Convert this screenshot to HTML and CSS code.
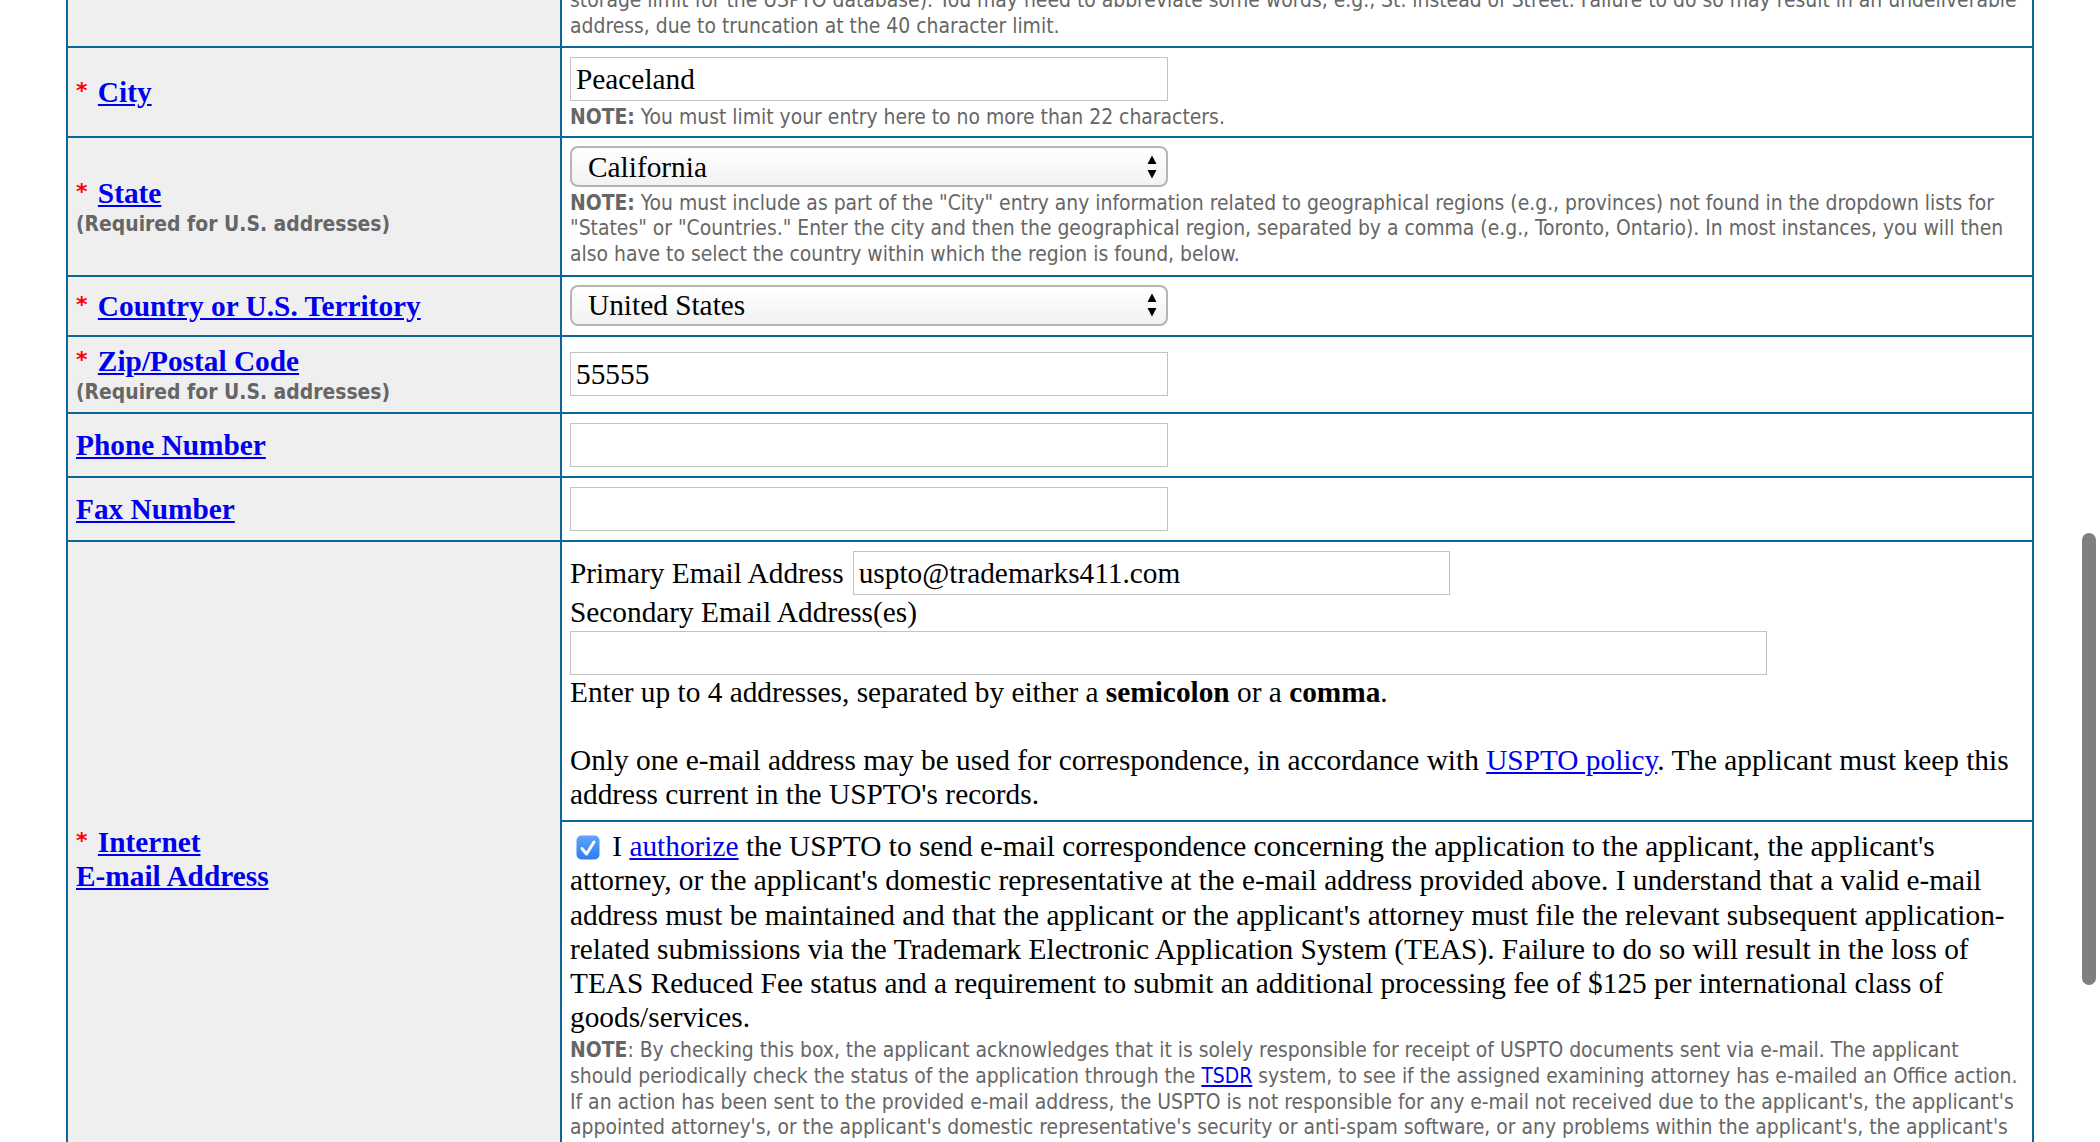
FILE: index.html
```html
<!DOCTYPE html>
<html>
<head>
<meta charset="utf-8">
<title>Correspondence Information</title>
<link rel="stylesheet" href="styles.css">
</head>
<body>
<table class="form">
  <colgroup><col class="col-label"><col class="col-field"></colgroup>
  <tbody>
    <tr>
      <td class="label"></td>
      <td class="field field-top">
        <div class="note nowrap">storage limit for the USPTO database). You may need to abbreviate some words, e.g., St. instead of Street. Failure to do so may result in an undeliverable<br>address, due to truncation at the 40 character limit.</div>
      </td>
    </tr>
    <tr>
      <td class="label"><span class="req">*</span> <a class="lbl" href="#">City</a></td>
      <td class="field field-city">
        <input class="text-input" type="text" value="Peaceland">
        <div class="note note-city"><b>NOTE:</b> You must limit your entry here to no more than 22 characters.</div>
      </td>
    </tr>
    <tr>
      <td class="label"><span class="req">*</span> <a class="lbl" href="#">State</a><div class="sub">(Required for U.S. addresses)</div></td>
      <td class="field field-state">
        <div class="select"><span>California</span><svg class="arrows" width="10" height="24" viewBox="0 0 10 24"><path d="M5 0.5 L9.5 9 L0.5 9 Z"/><path d="M0.5 15 L9.5 15 L5 23.5 Z"/></svg></div>
        <div class="note nowrap note-state"><b>NOTE:</b> You must include as part of the "City" entry any information related to geographical regions (e.g., provinces) not found in the dropdown lists for<br>"States" or "Countries." Enter the city and then the geographical region, separated by a comma (e.g., Toronto, Ontario). In most instances, you will then<br>also have to select the country within which the region is found, below.</div>
      </td>
    </tr>
    <tr>
      <td class="label"><span class="req">*</span> <a class="lbl" href="#">Country or U.S. Territory</a></td>
      <td class="field field-select">
        <div class="select"><span>United States</span><svg class="arrows" width="10" height="24" viewBox="0 0 10 24"><path d="M5 0.5 L9.5 9 L0.5 9 Z"/><path d="M0.5 15 L9.5 15 L5 23.5 Z"/></svg></div>
      </td>
    </tr>
    <tr>
      <td class="label"><span class="req">*</span> <a class="lbl" href="#">Zip/Postal Code</a><div class="sub">(Required for U.S. addresses)</div></td>
      <td class="field">
        <input class="text-input" type="text" value="55555">
      </td>
    </tr>
    <tr>
      <td class="label"><a class="lbl" href="#">Phone Number</a></td>
      <td class="field"><input class="text-input" type="text" value=""></td>
    </tr>
    <tr>
      <td class="label"><a class="lbl" href="#">Fax Number</a></td>
      <td class="field"><input class="text-input" type="text" value=""></td>
    </tr>
    <tr>
      <td class="label" rowspan="2"><span class="req">*</span> <a class="lbl" href="#">Internet<br>E-mail Address</a></td>
      <td class="field field-email">
        <div class="primary-line"><span>Primary Email Address</span><input class="text-input email-input" type="text" value="uspto@trademarks411.com"></div>
        <div>Secondary Email Address(es)</div>
        <input class="text-input secondary-input" type="text" value="">
        <div>Enter up to 4 addresses, separated by either a <b>semicolon</b> or a <b>comma</b>.<br><br>Only one e-mail address may be used for correspondence, in accordance with <a href="#">USPTO policy</a>. The applicant must keep this address current in the USPTO's records.</div>
      </td>
    </tr>
    <tr>
      <td class="field field-auth">
        <div class="auth-text"><span class="checkbox"><svg width="24" height="25" viewBox="0 0 24 25"><defs><linearGradient id="cbg" x1="0" y1="0" x2="0" y2="1"><stop offset="0" stop-color="#5ea3f8"/><stop offset="1" stop-color="#2f7eef"/></linearGradient></defs><rect x="0.5" y="0.5" width="23" height="24" rx="5" fill="url(#cbg)"/><path d="M6 13.5 L10.5 19 L18 7" fill="none" stroke="#fff" stroke-width="3" stroke-linecap="round" stroke-linejoin="round"/></svg></span> I <a href="#">authorize</a> the USPTO to send e-mail correspondence concerning the application to the applicant, the applicant's attorney, or the applicant's domestic representative at the e-mail address provided above. I understand that a valid e-mail address must be maintained and that the applicant or the applicant's attorney must file the relevant subsequent application-related submissions via the Trademark Electronic Application System (TEAS). Failure to do so will result in the loss of TEAS Reduced Fee status and a requirement to submit an additional processing fee of $125 per international class of goods/services.</div>
        <div class="note nowrap note-auth"><b>NOTE</b>: By checking this box, the applicant acknowledges that it is solely responsible for receipt of USPTO documents sent via e-mail. The applicant<br>should periodically check the status of the application through the <a href="#">TSDR</a> system, to see if the assigned examining attorney has e-mailed an Office action.<br>If an action has been sent to the provided e-mail address, the USPTO is not responsible for any e-mail not received due to the applicant's, the applicant's<br>appointed attorney's, or the applicant's domestic representative's security or anti-spam software, or any problems within the applicant's, the applicant's<br>appointed attorney's, or the applicant's domestic representative's e-mail account.</div>
      </td>
    </tr>
  </tbody>
</table>
<div class="scrollbar"></div>
</body>
</html>
```

FILE: styles.css
```css
html, body {
  margin: 0;
  padding: 0;
  overflow: hidden;
  background: #ffffff;
}

body {
  font-family: "Liberation Serif", "Times New Roman", serif;
  font-size: 29.33px;
  line-height: 34px;
  color: #000000;
}

a {
  color: #0000ee;
  text-decoration: underline;
}

.form {
  width: 1968px;
  margin: -21px auto 0;
  border-collapse: collapse;
  table-layout: fixed;
}

.col-label {
  width: 494px;
}

.form td {
  border: 2px solid #0a6598;
}

.label {
  background: #efefef;
  padding: 7px 8px;
  vertical-align: middle;
}

.field {
  background: #ffffff;
  padding: 9px 8px;
  vertical-align: middle;
}

.field-top {
  padding: 7px 8px 7px;
}

.field-city {
  padding: 9px 8px 6px;
}

.field-state {
  padding: 8px 8px 7px;
}

.field-select {
  padding: 8px 8px 9px;
}

.req {
  font-family: "DejaVu Sans", sans-serif;
  font-weight: bold;
  font-size: 22px;
  line-height: 22px;
  color: #ff0000;
  margin-right: 3px;
  vertical-align: 4px;
}

.lbl {
  font-weight: bold;
}

.sub {
  font-family: "DejaVu Sans Condensed", "DejaVu Sans", sans-serif;
  font-stretch: condensed;
  font-weight: bold;
  font-size: 20.9px;
  line-height: 25.6px;
  color: #666666;
  margin-top: 2px;
}

.note {
  font-family: "DejaVu Sans Condensed", "DejaVu Sans", sans-serif;
  font-stretch: condensed;
  font-size: 20.9px;
  line-height: 25.6px;
  color: #666666;
}

.nowrap {
  white-space: nowrap;
}

.note-city {
  margin-top: 3.5px;
}

.note-state {
  margin-top: 3.5px;
}

.note-auth {
  margin-top: 4px;
}

.text-input {
  display: block;
  box-sizing: border-box;
  width: 598px;
  height: 44px;
  margin: 0;
  padding: 0 5px;
  border: 1px solid #c2c2c2;
  border-radius: 0;
  background: #ffffff;
  font-family: "Liberation Serif", "Times New Roman", serif;
  font-size: 29.33px;
  color: #000000;
  outline: none;
}

.select {
  box-sizing: border-box;
  width: 598px;
  height: 41px;
  border: 2px solid #b5b5b5;
  border-radius: 8px;
  background: linear-gradient(#ffffff, #f2f2f2);
  display: flex;
  align-items: center;
  justify-content: space-between;
  padding: 0 9px 0 16px;
}

.arrows {
  display: block;
  fill: #000000;
}

.field-email {
  padding: 9px 8px;
}

.primary-line {
  display: flex;
  align-items: center;
  gap: 9px;
  height: 44px;
}

.email-input {
  width: 597px;
}

.secondary-input {
  width: 1197px;
  margin-top: 2px;
}

.field-auth {
  padding: 7px 8px 9px;
}

.auth-text {
  line-height: 34.2px;
}

.checkbox {
  display: inline-block;
  width: 24px;
  height: 25px;
  margin: 0 5px 0 6px;
  vertical-align: -4px;
}

.checkbox svg {
  display: block;
}

.scrollbar {
  position: fixed;
  right: 4px;
  top: 533px;
  width: 14px;
  height: 452px;
  border-radius: 7px;
  background: #7f7f7f;
}
```
